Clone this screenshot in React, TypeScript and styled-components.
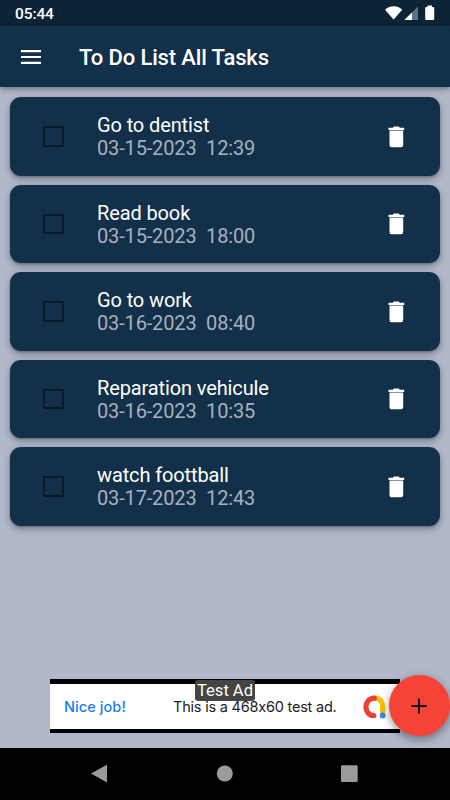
import React from "react";
import styled, { createGlobalStyle } from "styled-components";

const GlobalStyle = createGlobalStyle`
  *, *::before, *::after { box-sizing: border-box; }
  body { margin: 0; background: #b1b8ca; overflow: hidden; }
`;

const Screen = styled.div`
  position: relative;
  display: flex;
  flex-direction: column;
  width: 450px;
  height: 800px;
  overflow: hidden;
  background: #b1b8ca;
  font-family: Roboto, sans-serif;
`;

const StatusBar = styled.div`
  display: flex;
  flex: none;
  align-items: center;
  justify-content: space-between;
  height: 26px;
  padding: 2px 14px 0 15px;
  background: #0d2436;
  color: #fff;
  font-size: 15.5px;
  font-weight: 500;
  letter-spacing: -0.1px;
`;

const StatusIcons = styled.svg`
  display: block;
  width: 52px;
  height: 18px;
  margin-top: -2px;
`;

const AppBar = styled.header`
  display: flex;
  flex: none;
  align-items: center;
  height: 61px;
  padding: 1px 21px;
  background: #123049;
  box-shadow: 0 2px 6px rgba(0, 0, 0, 0.38);
`;

const MenuButton = styled.button`
  display: block;
  width: 20px;
  height: 14px;
  margin: 0 38px 0 0;
  padding: 0;
  border: 0;
  background: none;
  svg { display: block; }
`;

const Title = styled.h1`
  margin: 0;
  padding-top: 2px;
  color: #fff;
  font-size: 22px;
  font-weight: 500;
  line-height: 28px;
  letter-spacing: -0.13px;
  white-space: nowrap;
`;

const TaskList = styled.ul`
  display: flex;
  flex: 1;
  flex-direction: column;
  gap: 9px;
  margin: 0;
  padding: 10.3px 10px 0;
  list-style: none;
`;

const TaskCard = styled.li`
  display: flex;
  flex: none;
  align-items: center;
  height: 78.5px;
  padding: 0 34px 0 33px;
  border-radius: 11px;
  background: #123049;
  box-shadow: 0 3px 7px rgba(0, 0, 0, 0.32), 0 1px 2px rgba(0, 0, 0, 0.2);
`;

const Checkbox = styled.span`
  flex: none;
  width: 20.5px;
  height: 20.5px;
  margin-right: 33.5px;
  border: 2.3px solid #091a29;
  border-radius: 1px;
`;

const TaskText = styled.div`
  flex: 1;
  padding-top: 1px;
  font-size: 20px;
  line-height: 23px;
  white-space: pre;
`;

const TaskName = styled.div`
  color: #fff;
  letter-spacing: -0.12px;
`;

const TaskDate = styled.div`
  color: #a7b0bf;
  letter-spacing: -0.15px;
`;

const TrashIcon = styled.svg`
  flex: none;
  display: block;
  width: 18px;
  height: 22px;
`;

const AdBanner = styled.aside`
  position: relative;
  display: flex;
  flex: none;
  align-items: center;
  width: 350px;
  height: 54px;
  margin: 0 0 15px 50px;
  padding: 0 13px 0 14px;
  border: solid #000;
  border-width: 5px 0 4px;
  background: #fff;
  color: #1c1c1e;
  font-family: Inter, sans-serif;
  font-feature-settings: "calt" 0;
  font-size: 14.5px;
  white-space: nowrap;
`;

const AdPraise = styled.span`
  width: 109px;
  color: #1a7cf2;
  font-weight: 500;
  letter-spacing: 0.08px;
`;

const AdMessage = styled.span`
  flex: 1;
  letter-spacing: -0.21px;
`;

const AdTag = styled.span`
  position: absolute;
  top: -4px;
  left: 145px;
  width: 60px;
  height: 21px;
  border-radius: 3px;
  background: #444;
  color: #fff;
  font: 16.5px/22px Roboto, sans-serif;
  text-align: center;
`;

const AdLogo = styled.svg`
  flex: none;
  width: 24px;
  height: 24px;
`;

const AddButton = styled.button`
  position: absolute;
  right: 0;
  top: 675px;
  display: grid;
  place-items: center;
  width: 61px;
  height: 61px;
  padding: 0 1px 0 0;
  border: 0;
  border-radius: 50%;
  background: #f64337;
  box-shadow: 0 4px 8px rgba(0, 0, 0, 0.3), 0 1px 10px rgba(0, 0, 0, 0.12);
`;

const NavBar = styled.nav`
  flex: none;
  height: 52px;
  background: #000;
  svg { display: block; }
`;

const tasks = [
  { name: "Go to dentist", date: "03-15-2023  12:39" },
  { name: "Read book", date: "03-15-2023  18:00" },
  { name: "Go to work", date: "03-16-2023  08:40" },
  { name: "Reparation vehicule", date: "03-16-2023  10:35" },
  { name: "watch foottball", date: "03-17-2023  12:43" },
];

export default function App() {
  return (
    <Screen>
      <GlobalStyle />
      <StatusBar>
        <span>05:44</span>
        <StatusIcons viewBox="384 4 52 18" fill="#fff">
          <path d="M385 9.800C390 5.200 397.500 5.200 402.200 9.800L393.600 19.500Z" />
          <path d="M418 6.500V20H404.300Z" opacity="0.35" />
          <path d="M412 12.400V20H404.300Z" />
          <path d="M427.500 5.500h4.500v1.500h1.200q1 0 1 1V19q0 1-1 1h-7q-1 0-1-1V8q0-1 1-1h1.300z" />
        </StatusIcons>
      </StatusBar>
      <AppBar>
        <MenuButton aria-label="Menu">
          <svg width="20" height="14" fill="#fff">
            <path d="M0 0h20v2.200H0zM0 5.900h20v2.200H0zM0 11.800h20V14H0z" />
          </svg>
        </MenuButton>
        <Title>To Do List All Tasks</Title>
      </AppBar>
      <TaskList>
        {tasks.map((task) => (
          <TaskCard key={task.name}>
            <Checkbox role="checkbox" aria-checked={false} />
            <TaskText>
              <TaskName>{task.name}</TaskName>
              <TaskDate>{task.date}</TaskDate>
            </TaskText>
            <TrashIcon viewBox="0 0 18 22" fill="#fff">
              <path d="M1.500 5h13.700V19q0 2.200-2.200 2.200H3.700q-2.200 0-2.200-2.200z" />
              <path d="M.500 1.700H4.800L6 .500h4.700l1.200 1.200h4.300V4H.500z" />
              <path d="M1.500 4h13.700v1H1.500z" fill="#8995a1" />
            </TrashIcon>
          </TaskCard>
        ))}
      </TaskList>
      <AdBanner>
        <AdPraise>Nice job!</AdPraise>
        <AdMessage>This is a 468x60 test ad.</AdMessage>
        <AdLogo viewBox="0 0 24 24" fill="none" strokeWidth="5.2" strokeLinecap="round">
          <path d="M11.500 3.200C17 3.200 19.700 7 19.700 11.500V17" stroke="#fbbc04" />
          <path d="M11.300 3.200C6 3.200 2.900 7.500 2.900 12S6 20.600 10.800 20.600" stroke="#ea4035" />
          <circle cx="19.700" cy="20.500" r="2.900" fill="#3c82f0" />
        </AdLogo>
        <AdTag>Test Ad</AdTag>
      </AdBanner>
      <NavBar>
        <svg width="450" height="52" fill="#9b9b9b">
          <path d="M91 25.500L107 16.700V34.600Z" />
          <circle cx="224.800" cy="25.500" r="8" />
          <rect x="341" y="17.300" width="16.700" height="16.700" rx="1.200" />
        </svg>
      </NavBar>
      <AddButton aria-label="Add task">
        <svg width="16" height="16" stroke="#180806" strokeWidth="2">
          <path d="M8 .400V15.600M.400 8H15.600" />
        </svg>
      </AddButton>
    </Screen>
  );
}
